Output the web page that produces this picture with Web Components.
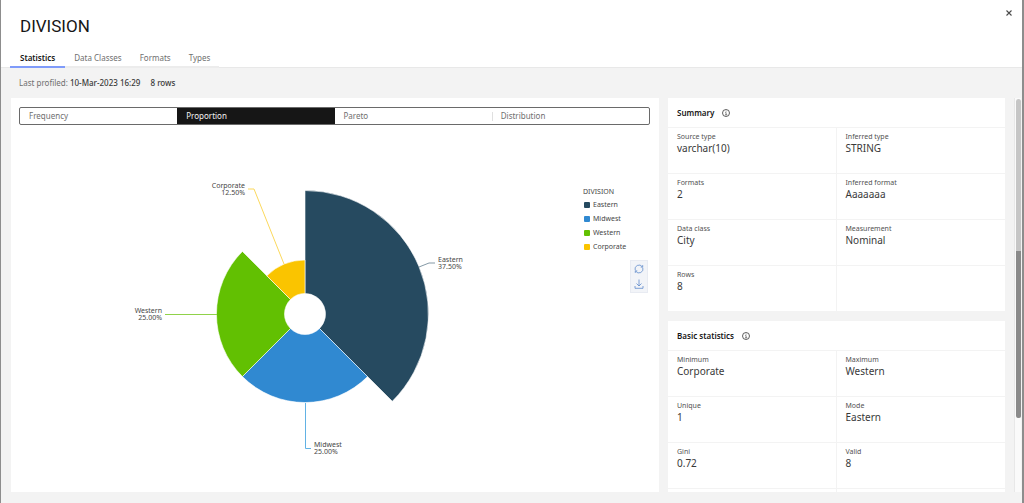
<!DOCTYPE html>
<html lang="en">
<head>
<meta charset="utf-8">
<title>Column profile</title>
<style>
  body { margin: 0; font-family: "Noto Sans", sans-serif; color: #393939; background: #f3f3f3; }
</style>
</head>
<body>
<profile-dialog heading="DIVISION">
  <profile-tabs slot="tabs"></profile-tabs>
  <chart-panel slot="chart"></chart-panel>
  <stat-card slot="side" heading="Summary">
    <stat-item label="Source type">varchar(10)</stat-item>
    <stat-item label="Inferred type">STRING</stat-item>
    <stat-item label="Formats">2</stat-item>
    <stat-item label="Inferred format">Aaaaaaa</stat-item>
    <stat-item label="Data class">City</stat-item>
    <stat-item label="Measurement">Nominal</stat-item>
    <stat-item label="Rows">8</stat-item>
    <stat-item></stat-item>
  </stat-card>
  <stat-card slot="side" heading="Basic statistics">
    <stat-item label="Minimum">Corporate</stat-item>
    <stat-item label="Maximum">Western</stat-item>
    <stat-item label="Unique">1</stat-item>
    <stat-item label="Mode">Eastern</stat-item>
    <stat-item label="Gini">0.72</stat-item>
    <stat-item label="Valid">8</stat-item>
    <stat-item></stat-item>
    <stat-item></stat-item>
  </stat-card>
</profile-dialog>

<script>
const define = (name, html, setup) => {
  const template = document.createElement('template');
  template.innerHTML = html;
  customElements.define(name, class extends HTMLElement {
    connectedCallback() {
      if (this.shadowRoot) return;
      this.attachShadow({ mode: 'open' }).append(template.content.cloneNode(true));
      if (setup) setup(this, this.shadowRoot);
    }
  });
};

define('profile-dialog', `
  <style>
    :host { display: flex; flex-direction: column; height: 100vh; box-sizing: border-box;
      border-left: 1px solid #8d8d8d; border-right: 2px solid #8d8d8d; background: #f3f3f3; overflow: hidden; }
    header { display: grid; grid-template-columns: 1fr auto; background: #fff; border-bottom: 1px solid #e8e8e8; flex: none; }
    h1 { margin: 0; padding: 16px 0 0 19px; font-family: Roboto, sans-serif; font-size: 17px; line-height: 20px; font-weight: 400; color: #161616; }
    .close { margin: 5px 5px 0 0; width: 16px; height: 16px; padding: 0; border: 0; background: none; display: grid; place-items: center; align-self: start; }
    ::slotted([slot=tabs]) { grid-column: 1 / -1; margin: 11px 0 -1px 9px; }
    .info { margin: 0; padding: 9px 18px; font-size: 8px; line-height: 12px; color: #6f6f6f; flex: none; }
    .info span { color: #393939; font-weight: 500; }
    .info span + span { margin-left: 8px; }
    main { flex: 1; min-height: 0; display: flex; padding: 0 1px 11px 10px; }
    .columns { flex: 1; display: grid; grid-template-columns: 648fr 337fr; gap: 9px; min-height: 0; }
    .side { min-height: 0; overflow: hidden; display: flex; flex-direction: column; gap: 10px; }
    .bar { width: 6px; margin-left: 9px; background: #fafafa; border-left: 1px solid #e8e8e8; display: flex; }
    .rail { flex: 1; margin: 1px 0 0 1px; height: 319px; border-radius: 3px; background: #c6c6c6; display: flex; flex-direction: column; justify-content: flex-end; }
    .thumb { height: 167px; border-radius: 0 0 3px 3px; background: #8a8a8a; }
  </style>
  <header>
    <h1></h1>
    <button class="close" aria-label="Close"><svg width="6" height="6" viewBox="0 0 6 6"><path d="M.5.5l5 5M5.5.5l-5 5" stroke="#4a4a4a" stroke-width="1.1"/></svg></button>
    <slot name="tabs"></slot>
  </header>
  <p class="info">Last profiled: <span>10-Mar-2023 16:29</span> <span>8 rows</span></p>
  <main>
    <div class="columns">
      <slot name="chart"></slot>
      <div class="side"><slot name="side"></slot></div>
    </div>
    <div class="bar"><div class="rail"><div class="thumb"></div></div></div>
  </main>`,
  (el, root) => { root.querySelector('h1').textContent = el.getAttribute('heading'); });

define('profile-tabs', `
  <style>
    :host { display: flex; }
    button { border: 0; border-bottom: 2px solid #ececec; background: none; font: 400 8px/12px "Noto Sans", sans-serif;
      color: #6f6f6f; padding: 5px 9px 2px; height: 21px; }
    button[aria-selected=true] { font-weight: 600; color: #161616; border-color: #7f9bfa; padding: 5px 10px 2px; }
  </style>
  <button role="tab" aria-selected="true">Statistics</button>
  <button role="tab" aria-selected="false">Data Classes</button>
  <button role="tab" aria-selected="false">Formats</button>
  <button role="tab" aria-selected="false">Types</button>`);

define('chart-panel', `
  <style>
    :host { display: block; background: #fff; padding: 9px 9px 0 8px; min-height: 0; overflow: hidden; }
    .switch { display: grid; grid-template-columns: repeat(4, 1fr); height: 18px; box-sizing: border-box;
      border: 1px solid #6a6a6a; border-radius: 2px; overflow: hidden; }
    .switch button { border: 0; padding: 0 9px; text-align: left; background: none; font: 400 8px/16px "Noto Sans", sans-serif; color: #6f6f6f; }
    .switch button[aria-pressed=true] { background: #161616; color: #f4f4f4; }
    .switch button:last-child { background: linear-gradient(#e0e0e0, #e0e0e0) 0 50% / 1px 9px no-repeat; }
    .chart { display: grid; grid-template-columns: 564fr 67fr; }
    svg.pie { display: block; width: 100%; }
    .pie text { font-size: 7px; fill: #464646; }
    .pie polyline { fill: none; stroke-width: 1; }
  </style>
  <div class="switch">
    <button aria-pressed="false">Frequency</button><button aria-pressed="true">Proportion</button><button aria-pressed="false">Pareto</button><button aria-pressed="false">Distribution</button>
  </div>
  <div class="chart">
    <svg class="pie" viewBox="-286 -189 564 367" role="img" aria-label="Proportion of each division">
      <g stroke="#fff" stroke-width=".6">
        <path fill="#264a60" d="M0-20.5V-123.500A123.500 123.500 0 0 1 87.300 87.300L14.500 14.500A20.500 20.500 0 0 0 0-20.500Z"/>
        <path fill="#3089d1" d="M14.500 14.500L62.600 62.600A88.500 88.500 0 0 1-62.600 62.600L-14.500 14.500A20.500 20.500 0 0 0 14.500 14.500Z"/>
        <path fill="#62c002" d="M-14.500 14.500L-62.600 62.600A88.500 88.500 0 0 1-62.600-62.600L-14.500-14.500A20.500 20.500 0 0 0-14.500 14.500Z"/>
        <path fill="#fac400" d="M-14.500-14.500L-38.200-38.200A54 54 0 0 1 0-54V-20.500A20.500 20.500 0 0 0-14.500-14.500Z"/>
      </g>
      <polyline stroke="#8499a6" points="114,-47 124,-51 130,-51"/>
      <polyline stroke="#62b2e4" points="0.500,89 0.500,134.500 6,134.500"/>
      <polyline stroke="#90d24a" points="-140,0.500 -88,0.500"/>
      <polyline stroke="#fbd85c" points="-57,-125 -51,-125 -21,-50"/>
      <text x="133" y="-52">Eastern<tspan x="133" dy="7">37.50%</tspan></text>
      <text x="9" y="133">Midwest<tspan x="9" dy="7">25.00%</tspan></text>
      <text x="-143" y="-1" text-anchor="end">Western<tspan x="-143" dy="7">25.00%</tspan></text>
      <text x="-60" y="-126" text-anchor="end">Corporate<tspan x="-60" dy="7">12.50%</tspan></text>
    </svg>
    <chart-legend></chart-legend>
  </div>`);

define('chart-legend', `
  <style>
    :host { display: flex; flex-direction: column; padding-top: 61px; color: #464646; }
    h2 { margin: 0; font-size: 7px; line-height: 12px; font-weight: 400; }
    ul { margin: 0; padding: 0; list-style: none; font-size: 7px; line-height: 14px; }
    li { display: flex; align-items: center; gap: 3px; padding-left: 1px; }
    li::before { content: ""; width: 6px; height: 6px; border-radius: 1px; background: var(--c); }
    .tools { align-self: flex-end; margin: 6px 2px 0 0; display: grid; background: #f2f4f8; border: 1px solid #e8ebf2; box-sizing: border-box; width: 18px; height: 33px; }
    .tools button { border: 0; background: none; padding: 0; display: grid; place-items: center; }
    .tools svg { width: 10px; height: 10px; fill: none; stroke: #5f8bcb; stroke-width: .8; }
  </style>
  <h2>DIVISION</h2>
  <ul>
    <li style="--c:#264a60">Eastern</li>
    <li style="--c:#3089d1">Midwest</li>
    <li style="--c:#62c002">Western</li>
    <li style="--c:#fac400">Corporate</li>
  </ul>
  <div class="tools">
    <button aria-label="Reset"><svg viewBox="0 0 10 10"><path d="M1.200 6.300A4 4 0 0 1 8.300 2.800M8.800 3.700A4 4 0 0 1 1.700 7.200M8.700 1.100V3.100H6.700M1.300 8.900V6.900H3.300"/></svg></button>
    <button aria-label="Download"><svg viewBox="0 0 10 10"><path d="M5 .5V7M2.500 4.500L5 7 7.500 4.500M1 7V9.300H9V7"/></svg></button>
  </div>`);

define('stat-card', `
  <style>
    :host { display: block; background: #fff; flex: none; }
    h2 { margin: 0; padding: 0 9px; height: 29px; display: flex; align-items: center; gap: 8px; font-size: 8px; line-height: 12px; font-weight: 600; color: #161616; }
    svg { width: 8px; height: 8px; fill: none; stroke: #393939; stroke-width: .8; }
    .grid { display: grid; grid-template-columns: 1fr 1fr; }
  </style>
  <h2><span></span><svg viewBox="0 0 8 8" aria-hidden="true"><circle cx="4" cy="4" r="3.500"/><path stroke-width=".6" d="M3.200 3.600H4.100V5.800M3 5.800H5.200M3.600 2.200H4.500"/></svg></h2>
  <div class="grid"><slot></slot></div>`,
  (el, root) => { root.querySelector('span').textContent = el.getAttribute('heading'); });

define('stat-item', `
  <style>
    :host { display: block; box-sizing: border-box; min-height: 46px; padding: 4px 9px 0; border-top: 1px solid #f3f3f3; }
    :host(:nth-child(odd)) { border-right: 1px solid #f3f3f3; }
    .label { font-size: 7px; line-height: 10px; color: #525252; }
    .value { font-size: 10px; line-height: 13px; color: #393939; }
  </style>
  <div class="label"></div>
  <div class="value"><slot></slot></div>`,
  (el, root) => { root.querySelector('.label').textContent = el.getAttribute('label') || ''; });
</script>
</body>
</html>
